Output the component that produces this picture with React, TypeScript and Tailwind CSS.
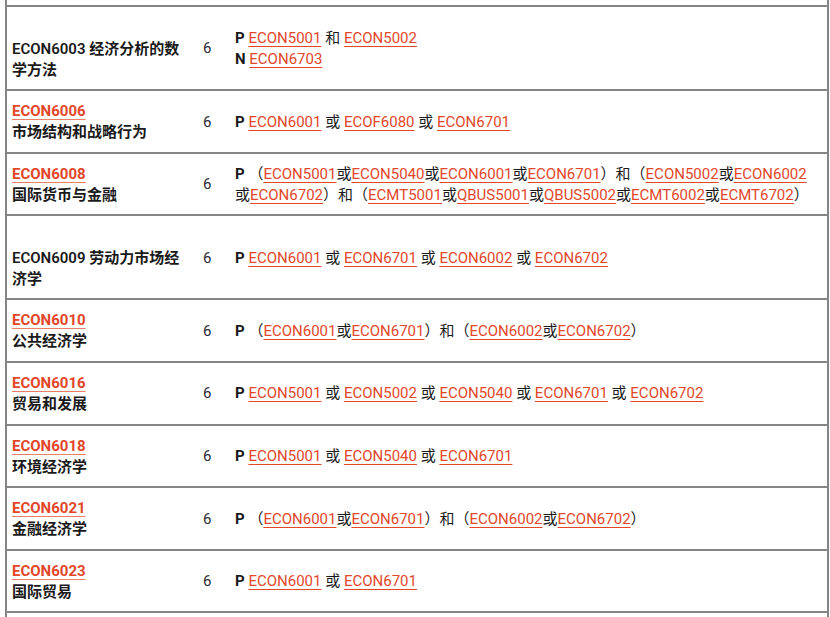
import type { ReactNode } from "react";

const L = ({ c }: { c: string }) => (
  <a href="#" className="text-[#e2472a] underline decoration-[#e64626] decoration-1 underline-offset-[3px]">
    {c}
  </a>
);

const Or = ({ codes, sep = " 或 " }: { codes: string[]; sep?: string }) => (
  <>
    {codes.map((c, i) => (
      <span key={c}>
        {i > 0 && sep}
        <L c={c} />
      </span>
    ))}
  </>
);

const P = () => <b className="font-bold">P</b>;

type Row = { code: string; title: string; linked: boolean; prereq: ReactNode };

const rows: Row[] = [
  {
    code: "ECON6003",
    title: "经济分析的数学方法",
    linked: false,
    prereq: (
      <>
        <div>
          <P /> <L c="ECON5001" /> 和 <L c="ECON5002" />
        </div>
        <div>
          <b className="font-bold">N</b> <L c="ECON6703" />
        </div>
      </>
    ),
  },
  {
    code: "ECON6006",
    title: "市场结构和战略行为",
    linked: true,
    prereq: (
      <>
        <P /> <Or codes={["ECON6001", "ECOF6080", "ECON6701"]} />
      </>
    ),
  },
  {
    code: "ECON6008",
    title: "国际货币与金融",
    linked: true,
    prereq: (
      <>
        <span className="whitespace-nowrap">
          <P /> （<Or sep="或" codes={["ECON5001", "ECON5040", "ECON6001", "ECON6701"]} />）和（
          <Or sep="或" codes={["ECON5002", "ECON6002"]} />
        </span>
        <br />
        <span className="whitespace-nowrap">
          或<L c="ECON6702" />）和（
          <Or sep="或" codes={["ECMT5001", "QBUS5001", "QBUS5002", "ECMT6002", "ECMT6702"]} />）
        </span>
      </>
    ),
  },
  {
    code: "ECON6009",
    title: "劳动力市场经济学",
    linked: false,
    prereq: (
      <>
        <P /> <Or codes={["ECON6001", "ECON6701", "ECON6002", "ECON6702"]} />
      </>
    ),
  },
  {
    code: "ECON6010",
    title: "公共经济学",
    linked: true,
    prereq: (
      <>
        <P /> （<Or sep="或" codes={["ECON6001", "ECON6701"]} />）和（
        <Or sep="或" codes={["ECON6002", "ECON6702"]} />）
      </>
    ),
  },
  {
    code: "ECON6016",
    title: "贸易和发展",
    linked: true,
    prereq: (
      <>
        <P /> <Or codes={["ECON5001", "ECON5002", "ECON5040", "ECON6701", "ECON6702"]} />
      </>
    ),
  },
  {
    code: "ECON6018",
    title: "环境经济学",
    linked: true,
    prereq: (
      <>
        <P /> <Or codes={["ECON5001", "ECON5040", "ECON6701"]} />
      </>
    ),
  },
  {
    code: "ECON6021",
    title: "金融经济学",
    linked: true,
    prereq: (
      <>
        <P /> （<Or sep="或" codes={["ECON6001", "ECON6701"]} />）和（
        <Or sep="或" codes={["ECON6002", "ECON6702"]} />）
      </>
    ),
  },
  {
    code: "ECON6023",
    title: "国际贸易",
    linked: true,
    prereq: (
      <>
        <P /> <Or codes={["ECON6001", "ECON6701"]} />
      </>
    ),
  },
];

export default function App() {
  return (
    <div
      className="h-[617px] overflow-hidden bg-white text-[15px] leading-[21px] text-[#1a1a1a]"
      style={{ fontFamily: 'Roboto, "Noto Sans CJK SC", sans-serif' }}
    >
      <div className="ml-[5px] mr-[1px] h-full border-x-2 border-[#858585]">
        <div className="h-[5px]" />
        <table className="w-full table-fixed border-collapse">
          <colgroup>
            <col className="w-[188px]" />
            <col className="w-[34px]" />
            <col />
          </colgroup>
          <tbody>
            {rows.map((r) => (
              <tr key={r.code} className="border-t-2 border-[#858585] align-middle">
                <td className="pl-[5px] pr-[5px] pt-[10px] pb-[8.6px] font-semibold">
                  {r.linked ? (
                    <>
                      <a
                        href="#"
                        className="font-bold text-[#e2472a] underline decoration-[#e64626]/70 decoration-1 underline-offset-[3px]"
                      >
                        {r.code}
                      </a>
                      <br />
                      {r.title}
                    </>
                  ) : (
                    <>
                      <span className="block h-[21.5px]" />
                      {r.code} {r.title}
                    </>
                  )}
                </td>
                <td className="pl-[8px] pt-[10px] pb-[8.6px] text-[#2a2a35]">6</td>
                <td className="pl-[6px] pr-[4px] pt-[10px] pb-[8.6px]">{r.prereq}</td>
              </tr>
            ))}
            <tr className="border-t-2 border-[#858585]">
              <td className="h-[40px]" />
              <td />
              <td />
            </tr>
          </tbody>
        </table>
      </div>
    </div>
  );
}
